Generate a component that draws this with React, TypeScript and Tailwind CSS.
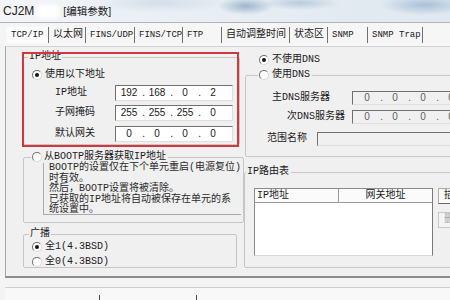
import React from 'react';

const tabs = [
  { label: 'TCP/IP', cls: 'w-[42px] text-[9px] bg-[#fcfcfc]' },
  { label: '以太网', cls: 'w-[37px]' },
  { label: 'FINS/UDP', cls: 'w-[49px] text-[9px]' },
  { label: 'FINS/TCP', cls: 'w-[48px] text-[9px]' },
  { label: 'FTP', cls: 'w-[39px] text-[9px]' },
  { label: '自动调整时间', cls: 'w-[68px]' },
  { label: '状态区', cls: 'w-[38px]' },
  { label: 'SNMP', cls: 'w-[40px] text-[9px]' },
  { label: 'SNMP Trap', cls: 'w-[55px] text-[9px]' },
];

function Radio({ on = false }: { on?: boolean }) {
  return (
    <span className="flex h-[10px] w-[10px] shrink-0 items-center justify-center rounded-full border border-[#6f6f6f] border-b-[#d8d8d8] border-r-[#d8d8d8] bg-white">
      {on && <span className="h-[4px] w-[4px] rounded-full bg-[#151515]" />}
    </span>
  );
}

function IpField({ parts, dim = false, className }: { parts: string[]; dim?: boolean; className: string }) {
  return (
    <div
      className={`flex shrink-0 items-center border border-[#dedede] border-l-[#707070] border-t-[#707070] font-['Liberation_Sans',sans-serif] text-[10px] ${
        dim ? 'bg-[#f0f0f0] text-[#606060]' : 'bg-white text-[#1a1a1a]'
      } ${className}`}
    >
      {parts.map((p, i) => (
        <React.Fragment key={i}>
          <span className="w-[18px] shrink-0 text-center">{p}</span>
          {i < 3 && <span className="w-[10px] shrink-0 pr-[3px] text-right">.</span>}
        </React.Fragment>
      ))}
    </div>
  );
}

export default function App() {
  return (
    <div className="flex h-[300px] w-[450px] flex-col overflow-hidden bg-[#f0f0f0] font-['Liberation_Mono','Noto_Sans_CJK_SC',monospace] text-[10px] leading-[12px] text-[#1a1a1a]">
      {/* title strip */}
      <div className="flex h-[22px] shrink-0 items-center bg-[radial-gradient(ellipse_28px_9px_at_246px_6px,#9db5cd_0%,transparent_100%),radial-gradient(ellipse_40px_7px_at_300px_3px,#b9cbdc_0%,transparent_100%),radial-gradient(ellipse_45px_10px_at_425px_5px,#a9c1d8_0%,transparent_100%),radial-gradient(ellipse_70px_10px_at_160px_3px,#d3dee9_0%,transparent_100%),linear-gradient(90deg,#f3f5f8_0%,#e8eef4_45%,#dfe8f0_100%)] pl-[3px]">
        <span className="font-['Liberation_Sans',sans-serif] text-[12px] text-[#222]">CJ2M</span>
        <span className="ml-[3px] h-[13px] w-[22px] rounded-[3px] bg-white blur-[2px]" />
        <span className="ml-[4px] font-['Liberation_Sans','Noto_Sans_CJK_SC',sans-serif] text-[10.5px] text-[#222]">[编辑参数]</span>
      </div>

      {/* window */}
      <div className="flex flex-1 flex-col border-t border-[#b4b4b4] bg-[#f4f4f4] pl-[5px]">
        {/* tabs */}
        <div className="flex h-[23px] shrink-0 items-center bg-[#f6f6f6] pl-[2px]">
          {tabs.map((t) => (
            <div
              key={t.label}
              className={`flex h-[16px] shrink-0 items-center overflow-hidden whitespace-nowrap border-r border-[#707070] pl-[4px] ${t.cls}`}
            >
              {t.label}
            </div>
          ))}
        </div>

        {/* tab panel */}
        <div className="flex h-[232px] shrink-0 items-start border-b-2 border-l border-t border-[#d2d2d2] border-b-[#8c8c8c] border-l-[#a5a5a5] bg-[#f0f0f0]">
          {/* left column */}
          <div className="ml-[17px] flex w-[217px] shrink-0 flex-col">
            <div className="relative mt-[4px]">
              <fieldset className="h-[94px] w-[217px] rounded-[2px] border border-[#c6c6c6]">
                <legend className="ml-[4px] px-[1px]">IP地址</legend>
                <div className="mt-[6px] flex h-[12px] items-center gap-[3px] pl-[8px]">
                  <Radio on />
                  <span>使用以下地址</span>
                </div>
                <div className="mt-[4px] flex items-center pl-[31px]">
                  <span className="w-[60px]">IP地址</span>
                  <IpField parts={['192', '168', '0', '2']} className="h-[16px] w-[118px] pl-[4px]" />
                </div>
                <div className="mt-[4px] flex items-center pl-[31px]">
                  <span className="w-[60px]">子网掩码</span>
                  <IpField parts={['255', '255', '255', '0']} className="h-[16px] w-[118px] pl-[4px]" />
                </div>
                <div className="mt-[5px] flex items-center pl-[31px]">
                  <span className="w-[60px]">默认网关</span>
                  <IpField parts={['0', '0', '0', '0']} className="h-[16px] w-[118px] pl-[4px]" />
                </div>
              </fieldset>
              {/* red annotation */}
              <div className="pointer-events-none absolute left-[-1px] top-[1px] h-[95px] w-[217px] border-2 border-[#d3373e]" />
            </div>

            <fieldset className="mt-[6px] h-[72px] w-[217px] rounded-[2px] border border-[#c6c6c6]">
              <legend className="ml-[7px] flex items-center gap-[2px] pl-[1px] pr-[2px]">
                <Radio />
                <span>从BOOTP服务器获取IP地址</span>
              </legend>
              <div className="ml-[19px] mr-[2px] h-[52px] whitespace-nowrap border-b border-l border-[#a9a9a9] pl-[5px] leading-[10.5px] text-[#2a2a2a]">
                BOOTP的设置仅在下个单元重启(电源复位)
                <br />
                时有效。
                <br />
                然后，BOOTP设置将被清除。
                <br />
                已获取的IP地址将自动被保存在单元的系
                <br />
                统设置中。
              </div>
            </fieldset>

            <fieldset className="mt-[5px] h-[40px] w-[214px] rounded-[2px] border border-[#c6c6c6]">
              <legend className="ml-[5px] px-[1px]">广播</legend>
              <div className="mt-[1px] flex h-[12px] items-center gap-[3px] pl-[8px]">
                <Radio on />
                <span>全1(4.3BSD)</span>
              </div>
              <div className="mt-[3px] flex h-[12px] items-center gap-[3px] pl-[8px]">
                <Radio />
                <span>全0(4.3BSD)</span>
              </div>
            </fieldset>
          </div>

          {/* right column */}
          <div className="ml-[4px] flex shrink-0 flex-col">
            <div className="mt-[7px] flex h-[12px] items-center gap-[3px] pl-[15px]">
              <Radio on />
              <span>不使用DNS</span>
            </div>

            <fieldset className="ml-[1px] mt-[3px] h-[88px] w-[240px] rounded-[2px] border border-[#c6c6c6]">
              <legend className="ml-[12px] flex items-center gap-[3px] pl-[1px] pr-[2px]">
                <Radio />
                <span>使用DNS</span>
              </legend>
              <div className="mt-[10px] flex items-center">
                <span className="w-[84px] text-right">主DNS服务器</span>
                <IpField dim parts={['0', '0', '0', '0']} className="ml-[22px] h-[14px] w-[120px] pl-[5px]" />
              </div>
              <div className="mt-[5px] flex items-center">
                <span className="w-[99px] text-right">次DNS服务器</span>
                <IpField dim parts={['0', '0', '0', '0']} className="ml-[7px] h-[14px] w-[120px] pl-[5px]" />
              </div>
              <div className="mt-[8px] flex items-center">
                <span className="w-[61px] text-right">范围名称</span>
                <div className="ml-[10px] h-[14px] w-[160px] shrink-0 border border-[#dedede] border-l-[#707070] border-t-[#707070] bg-[#f0f0f0]" />
              </div>
            </fieldset>

            <fieldset className="mt-[9px] h-[102px] w-[240px] rounded-[2px] border border-[#c6c6c6]">
              <legend className="ml-[1px] pl-[1px] pr-[2px]">IP路由表</legend>
              <div className="mt-[10px] flex items-start">
                <div className="ml-[9px] flex h-[68px] w-[179px] shrink-0 flex-col border border-[#8a8a8a] border-b-[#d8d8d8] border-r-[#7a7a7a] bg-white">
                  <div className="flex h-[14px] shrink-0 border-b border-[#9a9a9a] bg-[#fbfbfb]">
                    <span className="w-[84px] border-r border-[#9a9a9a] pl-[2px] leading-[13px]">IP地址</span>
                    <span className="flex-1 text-center leading-[13px]">网关地址</span>
                  </div>
                </div>
                <div className="ml-[5px] flex shrink-0 flex-col">
                  <div className="flex h-[16px] w-[32px] items-center justify-center border border-[#acacac] border-b-[#6a6a6a] bg-[#fafafa]">
                    插入
                  </div>
                  <div className="mt-[8px] flex h-[16px] w-[32px] items-center justify-center border border-[#c8c8c8] bg-[#f4f4f4] text-[#a8a8a8]">
                    删除
                  </div>
                </div>
              </div>
            </fieldset>
          </div>
        </div>

        {/* bottom strip */}
        <div className="flex flex-1 flex-col">
          <div className="h-[9px] shrink-0" />
          <div className="flex flex-1 items-end border-t border-[#d0d0d0] bg-[#f8f8f8]">
            <div className="h-[5px] w-[95px] border-r border-[#4a4a4a]" />
            <div className="h-[5px] w-[97px] border-r border-[#4a4a4a]" />
          </div>
        </div>
      </div>
    </div>
  );
}
